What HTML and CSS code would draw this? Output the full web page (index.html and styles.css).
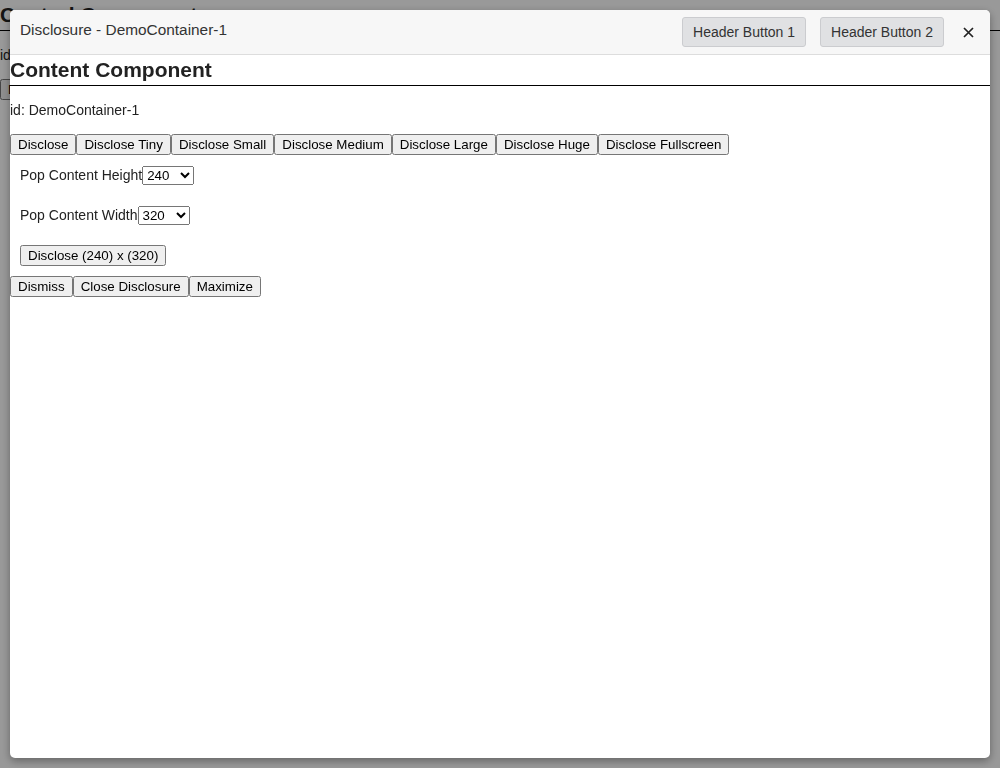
FILE: index.html
```html
<!DOCTYPE html>
<html>
<head>
<meta charset="utf-8">
<title>Disclosure</title>
<link rel="stylesheet" href="styles.css">
</head>
<body>
<div class="page">
  <h2 class="title">Control Components</h2>
  <p class="ident">id: DemoContainer</p>
  <div class="btnrow"><button>Disclose</button><button>Disclose Tiny</button><button>Disclose Small</button></div>
</div>

<div class="overlay">
  <div class="modal">
    <div class="modal-header">
      <div class="modal-title">Disclosure - DemoContainer-1</div>
      <div class="header-actions">
        <button class="hbtn">Header Button 1</button>
        <button class="hbtn">Header Button 2</button>
        <button class="close" aria-label="Close"><svg width="11" height="11" viewBox="0 0 11 11"><path d="M1 1L10 10M10 1L1 10" stroke="#222" stroke-width="1.7" fill="none"/></svg></button>
      </div>
    </div>
    <div class="modal-body">
      <h2 class="title">Content Component</h2>
      <p class="ident">id: DemoContainer-1</p>
      <div class="btnrow"><button>Disclose</button><button>Disclose Tiny</button><button>Disclose Small</button><button>Disclose Medium</button><button>Disclose Large</button><button>Disclose Huge</button><button>Disclose Fullscreen</button></div>
      <div class="field">Pop Content Height<select class="sel"><option>240</option><option>120</option><option>480</option></select></div>
      <div class="field">Pop Content Width<select class="sel"><option>320</option><option>160</option><option>640</option></select></div>
      <div class="field"><button>Disclose (240) x (320)</button></div>
      <div class="btnrow"><button>Dismiss</button><button>Close Disclosure</button><button>Maximize</button></div>
    </div>
  </div>
</div>
</body>
</html>
```
FILE: styles.css
```css
html, body {
  margin: 0;
  padding: 0;
  background: #fff;
}
body {
  font-family: "Liberation Sans", Arial, sans-serif;
  font-size: 14px;
  color: #222;
}
.title {
  font-size: 21px;
  font-weight: bold;
  line-height: 24px;
  margin: 3px 0 0;
  padding-bottom: 3px;
  border-bottom: 1px solid #000;
  white-space: nowrap;
}
.ident {
  margin: 16px 0;
  line-height: 16px;
}
.btnrow {
  display: flex;
}
.field {
  padding: 10px;
  line-height: 20px;
}
.sel {
  width: 52px;
  height: 19px;
}
.overlay {
  position: fixed;
  inset: 0;
  background: rgba(0, 0, 0, 0.4);
}
.modal {
  position: absolute;
  left: 10px;
  top: 10px;
  width: 980px;
  height: 748px;
  background: #fff;
  border-radius: 5px;
  box-shadow: 0 3px 8px rgba(0, 0, 0, 0.35);
  overflow: hidden;
  display: flex;
  flex-direction: column;
}
.modal-header {
  display: flex;
  align-items: flex-start;
  padding: 7px 16px 7px 10px;
  background: #f7f7f7;
  border-bottom: 1px solid #ddd;
}
.modal-title {
  flex: 1;
  font-size: 15.4px;
  line-height: 17px;
  margin-top: 4px;
  color: #333;
}
.header-actions {
  display: flex;
  align-items: center;
  gap: 14px;
  height: 30px;
}
.hbtn {
  height: 30px;
  padding: 0 10px;
  font-family: "Liberation Sans", Arial, sans-serif;
  font-size: 14px;
  color: #333;
  background: #e0e1e3;
  border: 1px solid #cbcccf;
  border-radius: 3px;
}
.close {
  margin-left: 5px;
  padding: 0;
  border: 0;
  background: transparent;
  width: 11px;
  height: 11px;
  display: flex;
}
.modal-body {
  flex: 1;
}
```
